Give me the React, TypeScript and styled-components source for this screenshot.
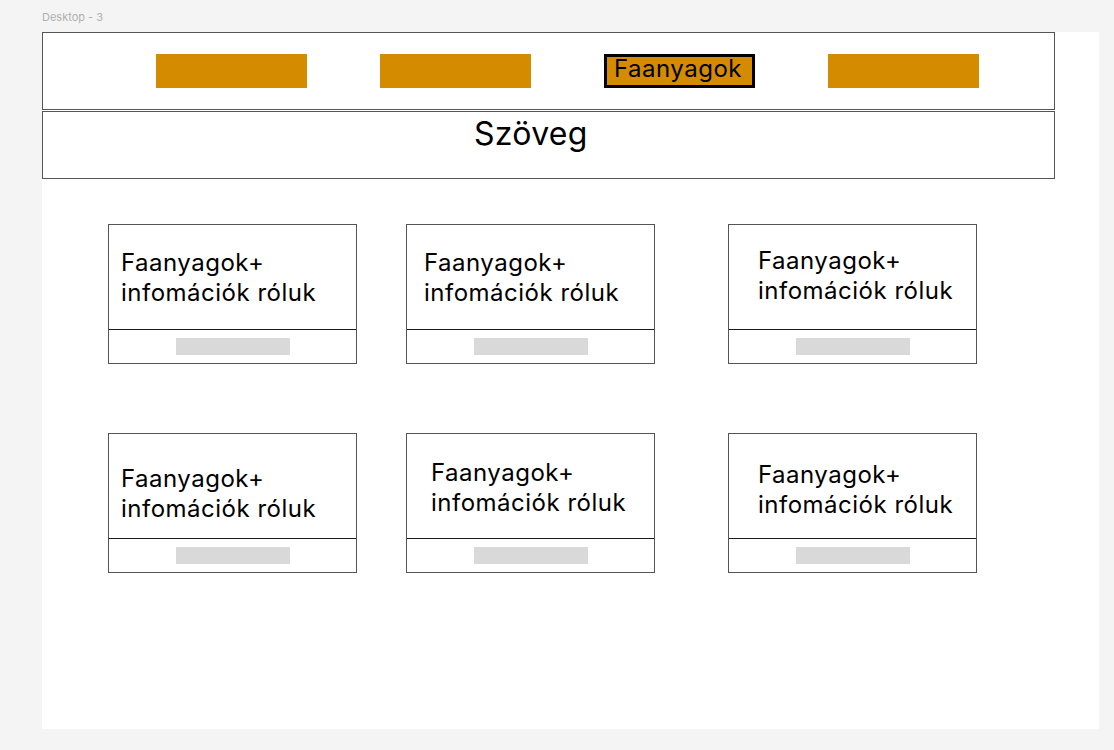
import React from "react";
import styled, { createGlobalStyle } from "styled-components";

const Global = createGlobalStyle`
  html, body { margin: 0; padding: 0; background: #f4f4f4; }
  body { font-family: Inter, "Noto Sans", Arial, sans-serif; }
`;

const Page = styled.div`
  width: 1114px;
  height: 750px;
  background: #f4f4f4;
  padding: 11px 0 0 42px;
  box-sizing: border-box;
  overflow: hidden;
`;

const FrameLabel = styled.div`
  font-family: Inter, sans-serif;
  font-size: 11px;
  line-height: 13px;
  color: #b0b0b0;
  height: 21px;
`;

const Frame = styled.div`
  width: 1057px;
  height: 697px;
  background: #ffffff;
  display: flex;
  flex-direction: column;
`;

const Header = styled.nav`
  width: 1013px;
  height: 78px;
  box-sizing: border-box;
  border: 1px solid #555;
  display: flex;
  align-items: flex-start;
  gap: 73px;
  padding: 21px 0 0 113px;
`;

const NavItem = styled.div<{ $active?: boolean }>`
  width: 151px;
  height: 34px;
  box-sizing: border-box;
  background: #d48b00;
  border: ${(p) => (p.$active ? "3px solid #000" : "none")};
  font-family: Inter, sans-serif;
  font-size: 24px;
  line-height: 24px;
  letter-spacing: 0.5px;
  color: #000;
  padding-left: 7px;
  white-space: nowrap;
`;

const TextBanner = styled.div`
  width: 1013px;
  height: 68px;
  margin-top: 1px;
  box-sizing: border-box;
  border: 1px solid #555;
  padding: 2px 0 0 431px;
  font-family: Inter, sans-serif;
  font-size: 32px;
  line-height: 39px;
  letter-spacing: 0.3px;
  color: #000;
`;

const CardGrid = styled.div`
  display: grid;
  grid-template-columns: 249px 298px 322px;
  justify-items: end;
  row-gap: 69px;
  margin: 45px 0 0 66px;
`;

const Card = styled.div`
  width: 249px;
  height: 140px;
  box-sizing: border-box;
  border: 1px solid #555;
  display: flex;
  flex-direction: column;
`;

const CardBody = styled.div<{ $px: number; $py: number }>`
  height: 105px;
  box-sizing: border-box;
  border-bottom: 1px solid #1a1a1a;
  padding: ${(p) => p.$py}px 0 0 ${(p) => p.$px}px;
  font-family: Inter, sans-serif;
  font-size: 24px;
  line-height: 30px;
  letter-spacing: 0.5px;
  color: #000;
`;

const CardFooter = styled.div`
  flex: 1;
  display: flex;
  justify-content: center;
  align-items: flex-start;
  padding-top: 8px;
  padding-left: 1px;
`;

const Placeholder = styled.div`
  width: 114px;
  height: 17px;
  background: #d9d9d9;
`;

const cards = [
  { px: 12, py: 23 },
  { px: 17, py: 23 },
  { px: 29, py: 21 },
  { px: 12, py: 30 },
  { px: 24, py: 24 },
  { px: 29, py: 26 },
];

export default function App() {
  return (
    <>
      <Global />
      <Page>
        <FrameLabel>Desktop - 3</FrameLabel>
        <Frame>
          <Header>
            <NavItem />
            <NavItem />
            <NavItem $active>Faanyagok</NavItem>
            <NavItem />
          </Header>
          <TextBanner>Szöveg</TextBanner>
          <CardGrid>
            {cards.map((c, i) => (
              <Card key={i}>
                <CardBody $px={c.px} $py={c.py}>
                  Faanyagok+
                  <br />
                  infomációk róluk
                </CardBody>
                <CardFooter>
                  <Placeholder />
                </CardFooter>
              </Card>
            ))}
          </CardGrid>
        </Frame>
      </Page>
    </>
  );
}
